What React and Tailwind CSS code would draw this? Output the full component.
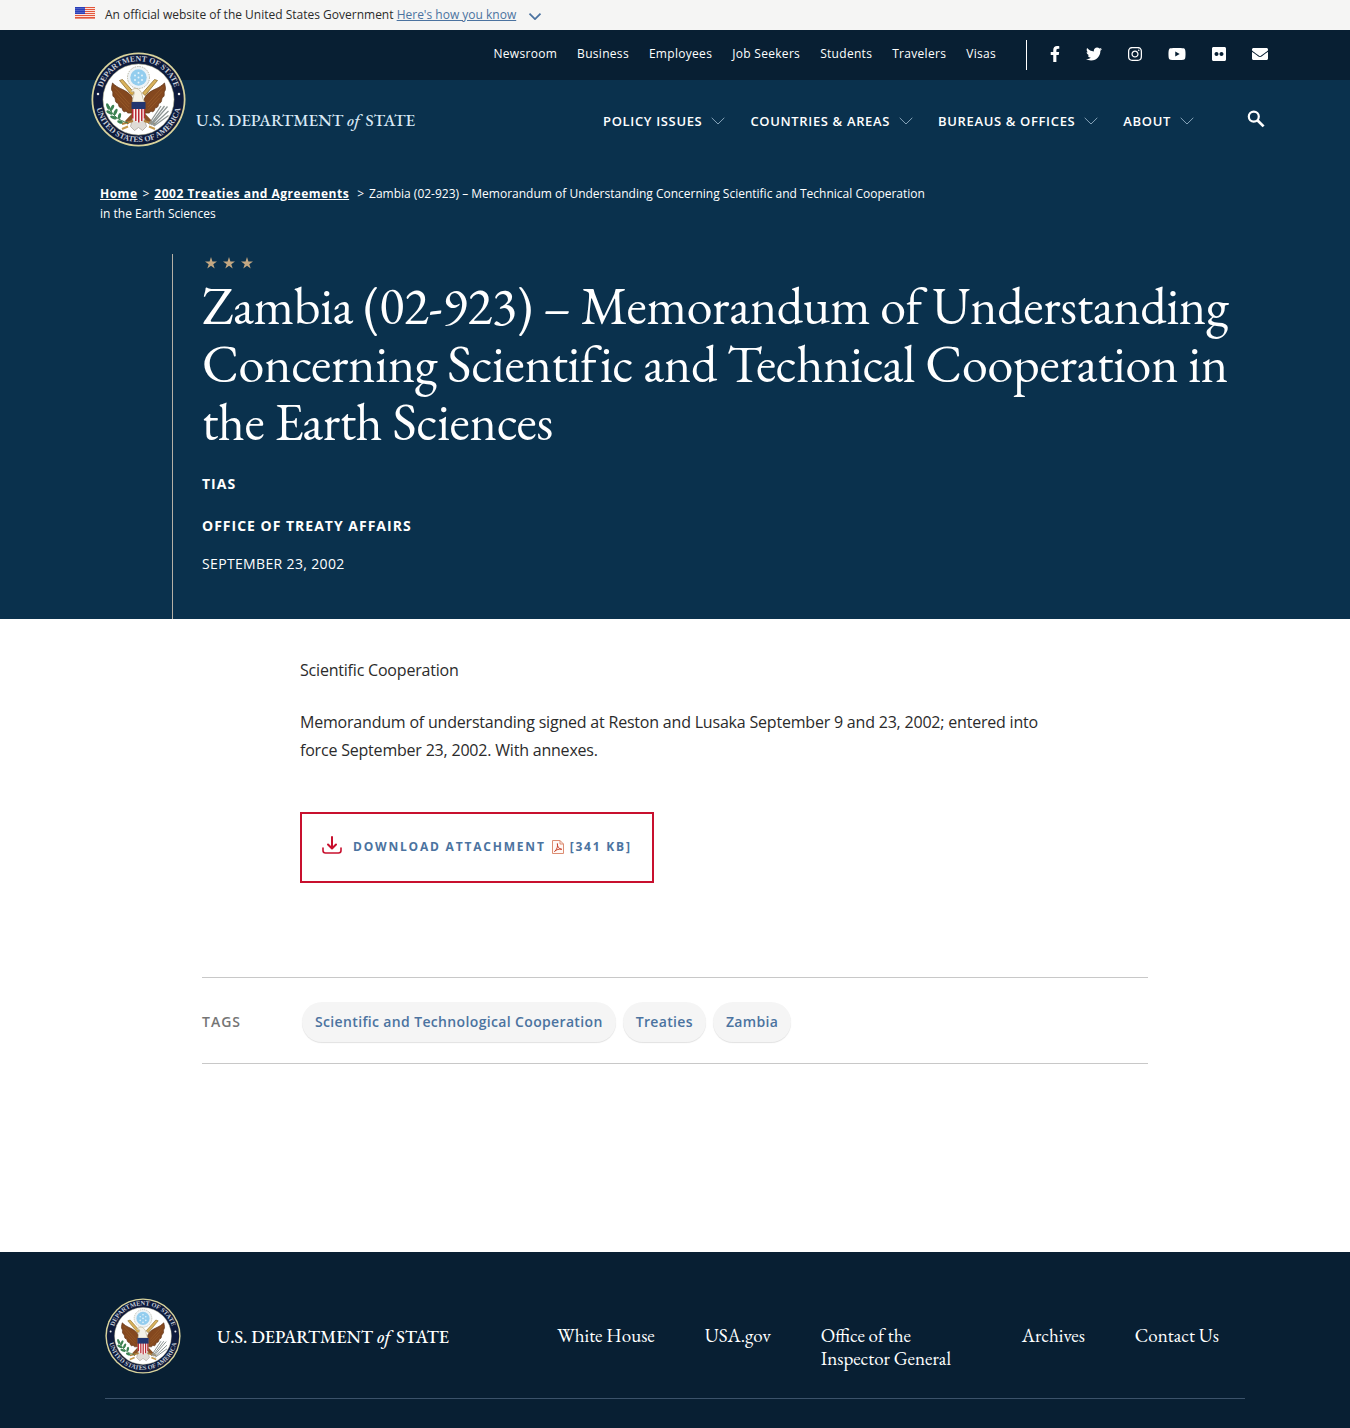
import React from "react";
import {
  FaFacebookF,
  FaTwitter,
  FaInstagram,
  FaYoutube,
  FaFlickr,
  FaEnvelope,
} from "react-icons/fa";

const serif = "font-['EB_Garamond','Liberation_Serif',serif]";

const utilityLinks = ["Newsroom", "Business", "Employees", "Job Seekers", "Students", "Travelers", "Visas"];

const socialLinks = [
  { label: "Facebook", Icon: FaFacebookF, size: "h-4 w-[10px]" },
  { label: "Twitter", Icon: FaTwitter, size: "h-4 w-4" },
  { label: "Instagram", Icon: FaInstagram, size: "h-4 w-[14px]" },
  { label: "YouTube", Icon: FaYoutube, size: "h-4 w-[18px]" },
  { label: "Flickr", Icon: FaFlickr, size: "h-4 w-[14px]" },
  { label: "Email", Icon: FaEnvelope, size: "h-4 w-4" },
];

const menus = ["Policy Issues", "Countries & Areas", "Bureaus & Offices", "About"];

const tags = ["Scientific and Technological Cooperation", "Treaties", "Zambia"];

function Flag() {
  return (
    <svg viewBox="0 0 20 12" className="h-3 w-5 shrink-0" aria-hidden="true">
      <rect width="20" height="12" fill="#fbe3dc" />
      {[0, 2, 4, 6, 8, 10].map((y) => (
        <rect key={y} y={y} width="20" height="1" fill="#e2573c" />
      ))}
      <rect y="11.4" width="20" height="0.6" fill="#e2573c" />
      <rect width="10" height="7" fill="#2a3fb8" />
      {[1, 3, 5].map((y) =>
        [1, 3, 5, 7, 9].map((x) => <circle key={`${x}-${y}`} cx={x} cy={y + 0.5} r="0.45" fill="#cdd5f5" />)
      )}
    </svg>
  );
}

function Chevron({ className, strokeWidth = 1 }) {
  return (
    <svg viewBox="0 0 14 8" className={className} fill="none" stroke="currentColor" strokeWidth={strokeWidth} aria-hidden="true">
      <path d="M0.7 0.8 L7 7 L13.3 0.8" />
    </svg>
  );
}

function SearchIcon() {
  return (
    <svg viewBox="0 0 24 24" className="h-6 w-6" fill="none" stroke="currentColor" aria-hidden="true">
      <circle cx="9.8" cy="9.6" r="5" strokeWidth="2.2" />
      <path d="M13.4 13.2 L19.6 19.4" strokeWidth="2.7" />
    </svg>
  );
}

function Seal({ id, className }) {
  return (
    <svg viewBox="0 0 190 190" className={className} role="img" aria-label="Department of State seal">
      <defs>
        <path id={`${id}-top`} d="M20.5 106 A75.5 75.5 0 1 1 169.5 106" />
        <path id={`${id}-bottom`} d="M10 81 A86 86 0 1 0 180 81" />
      </defs>
      <circle cx="95" cy="95" r="94" fill="#d9d39c" />
      <circle cx="95" cy="95" r="90.5" fill="#0d1a3c" />
      <circle cx="95" cy="95" r="71" fill="#fff" stroke="#c9c59a" strokeWidth="1" />
      <g fill="#c6cdd8" fontFamily="Liberation Serif, serif" fontSize="16" fontWeight="bold">
        <text textAnchor="middle">
          <textPath href={`#${id}-top`} startOffset="50%">DEPARTMENT OF STATE</textPath>
        </text>
        <text textAnchor="middle">
          <textPath href={`#${id}-bottom`} startOffset="50%">UNITED STATES OF AMERICA</textPath>
        </text>
      </g>
      <circle cx="14" cy="84" r="2.5" fill="#e8e8e8" />
      <circle cx="176" cy="84" r="2.5" fill="#e8e8e8" />

      {/* Glory of stars */}
      <circle cx="95" cy="51" r="22" fill="#eef3f6" stroke="#b9b7a4" strokeWidth="2" strokeDasharray="3 2" />
      <circle cx="95" cy="51" r="16.5" fill="#93cdee" />
      <g fill="#e4f3fb">
        <circle cx="95" cy="42" r="2" /><circle cx="88" cy="47" r="2" /><circle cx="102" cy="47" r="2" />
        <circle cx="95" cy="51" r="2" /><circle cx="88" cy="56" r="2" /><circle cx="102" cy="56" r="2" />
        <circle cx="95" cy="61" r="2" />
      </g>

      {/* Scroll */}
      <path d="M57 57 L63 55 L87 82 L82 87 Z M133 57 L127 55 L103 82 L108 87 Z" fill="#d9b25c" stroke="#8b6b2b" strokeWidth="1.5" />

      {/* Wings */}
      <path d="M43 62 C55 74 64 73 76 83 C84 90 86 99 84 114 L84 124 C77 119 75 126 70 118 C64 123 63 114 61 111 C55 113 56 104 53 102 C47 101 50 94 47 91 C41 88 45 82 43 79 C39 74 42 68 43 62 Z" fill="#84481f" stroke="#5f3417" strokeWidth="1.5" />
      <path d="M147 62 C135 74 126 73 114 83 C106 90 104 99 106 114 L106 124 C113 119 115 126 120 118 C126 123 127 114 129 111 C135 113 134 104 137 102 C143 101 140 94 143 91 C149 88 145 82 147 79 C151 74 148 68 147 62 Z" fill="#84481f" stroke="#5f3417" strokeWidth="1.5" />
      <g fill="none" stroke="#a5672f" strokeWidth="1">
        <path d="M47 70 L77 104 M48 79 L76 110 M53 92 L76 117 M143 70 L113 104 M142 79 L114 110 M137 92 L114 117" />
      </g>

      {/* Legs and tail */}
      <path d="M83 122 L68 138 L73 145 L88 132 Z M107 122 L122 138 L117 145 L102 132 Z" fill="#8a5227" />
      <path d="M85 126 H105 L111 149 L103 157 L95 151 L87 157 L79 149 Z" fill="#dfdbd6" stroke="#a8a19a" strokeWidth="1.5" />
      <path d="M62 144 L84 138 M106 138 L128 144" stroke="#b2803a" strokeWidth="4" />

      {/* Head */}
      <path d="M83 100 C83 88 88 84 86 79 L80 80 C82 73 91 70 97 76 C104 82 101 90 107 100 Z" fill="#f6f3e8" stroke="#b9ac8c" strokeWidth="1.5" />
      <path d="M80 80 L77 84 L84 83 Z" fill="#dba83b" />

      {/* Shield */}
      <path d="M82 101 H108 V128 C108 137 99 139 95 142 C91 139 82 137 82 128 Z" fill="#f8f4f0" />
      <g fill="#b92b38">
        <rect x="82" y="110" width="3" height="23" />
        <rect x="88" y="110" width="3" height="28" />
        <rect x="94" y="110" width="3" height="31" />
        <rect x="100" y="110" width="3" height="28" />
        <rect x="105.5" y="110" width="2.5" height="23" />
      </g>
      <path d="M81 100 H109 V114 H81 Z" fill="#23366f" />

      {/* Olive branch */}
      <path d="M36 108 C42 128 55 136 74 142" fill="none" stroke="#3f7a49" strokeWidth="2" />
      <g fill="#3c8253">
        <ellipse cx="34" cy="109" rx="3" ry="7" transform="rotate(-20 34 109)" />
        <ellipse cx="42" cy="112" rx="3" ry="7" transform="rotate(30 42 112)" />
        <ellipse cx="37" cy="121" rx="3" ry="7" transform="rotate(-60 37 121)" />
        <ellipse cx="49" cy="120" rx="3" ry="7" transform="rotate(25 49 120)" />
        <ellipse cx="45" cy="131" rx="3" ry="7" transform="rotate(-70 45 131)" />
        <ellipse cx="57" cy="128" rx="3" ry="6" transform="rotate(15 57 128)" />
        <ellipse cx="58" cy="140" rx="3" ry="6" transform="rotate(-70 58 140)" />
      </g>

      {/* Arrows */}
      <g stroke="#8e9695" strokeWidth="2.5">
        <path d="M116 144 L140 108 M119 145 L147 108 M121 146 L153 109 M124 147 L155 118 M126 148 L155 127" />
      </g>
      <path d="M74 149 L62 154 M116 149 L128 154" stroke="#c69a4e" strokeWidth="4" />
    </svg>
  );
}

function Wordmark({ className }) {
  return (
    <span className={`${serif} ${className} font-medium whitespace-nowrap`}>
      U.S. DEPARTMENT <i className="mr-[2px]">of</i> STATE
    </span>
  );
}

function Star() {
  return (
    <svg viewBox="0 0 24 24" className="h-3 w-3" fill="#c4a882" aria-hidden="true">
      <path d="M12 0 L14.9 8.8 H24 L16.6 14.3 L19.4 23 L12 17.7 L4.6 23 L7.4 14.3 L0 8.8 H9.1 Z" />
    </svg>
  );
}

function DownloadIcon() {
  return (
    <svg viewBox="0 0 20 18" className="h-[18px] w-5" fill="none" stroke="#c8102e" strokeWidth="2" strokeLinecap="round" strokeLinejoin="round" aria-hidden="true">
      <path d="M10 1 V12 M6 8.5 L10 12.5 L14 8.5" />
      <path d="M1 12 V14.5 Q1 17 3.5 17 H16.5 Q19 17 19 14.5 V12" strokeWidth="1.6" />
    </svg>
  );
}

function PdfIcon() {
  return (
    <svg viewBox="0 0 12 14" className="h-[14px] w-3" fill="none" stroke="#dc8d72" strokeWidth="1" aria-hidden="true">
      <path d="M0.5 0.5 H8 L11.5 4 V13.5 H0.5 Z" fill="#fff8f5" />
      <path d="M8 0.5 V4 H11.5" />
      <path d="M2.5 11.5 C5 9.5 6 6.5 5.4 3.6 C5 6.5 7 9 9.8 9.3 C7 8.8 4.5 9.5 2.5 11.5 Z" stroke="#c9432d" />
    </svg>
  );
}

export default function App() {
  return (
    <div className="flex min-h-screen flex-col bg-white font-['Open_Sans',sans-serif] text-[#2b2b2b]">
      <div className="bg-[#f5f5f4]">
        <div className="mx-auto flex h-[30px] max-w-[1200px] items-center text-xs">
          <div className="-mt-1"><Flag /></div>
          <p className="ml-[10px]">
            An official website of the United States Government{" "}
            <button type="button" className="text-[#4b73a0] underline">Here's how you know</button>
          </p>
          <Chevron className="mt-[2px] ml-3 h-[7px] w-[14px] text-[#4b73a0]" strokeWidth={2} />
        </div>
      </div>

      <header className="bg-[#0a314d] text-white">
        <div className="bg-[#081f33]">
          <div className="mx-auto flex h-[50px] max-w-[1200px] items-center justify-end pr-[7px]">
            <nav aria-label="Utility" className="flex gap-5 pr-[30px] pb-[2px] text-xs tracking-wide">
              {utilityLinks.map((l) => (
                <a key={l} href="#">{l}</a>
              ))}
            </nav>
            <div className="flex h-[30px] items-center gap-[26px] border-l border-white pb-[2px] pl-[23px]">
              {socialLinks.map(({ label, Icon, size }) => (
                <a key={label} href="#" aria-label={label}>
                  <Icon className={size} />
                </a>
              ))}
            </div>
          </div>
        </div>

        <div className="mx-auto flex h-[104px] max-w-[1200px] items-start justify-between pr-[7px] pl-4">
          <a href="#" className="flex items-start">
            <Seal id="header-seal" className="-mt-7 h-[95px] w-[95px]" />
            <Wordmark className="mt-7 ml-[10px] text-[17px] leading-6 text-[#d9e9f6]" />
          </a>
          <div className="flex items-center pt-[27px]">
            <nav aria-label="Main" className="flex gap-[25px] text-[13px] leading-7 font-semibold tracking-wider">
              {menus.map((m) => (
                <button key={m} type="button" className="flex items-center gap-[9px] uppercase">
                  {m}
                  <Chevron className="h-2 w-[14px] text-[#86a3b8]" />
                </button>
              ))}
            </nav>
            <button type="button" aria-label="Search" className="-mt-1 ml-[50px]">
              <SearchIcon />
            </button>
          </div>
        </div>

        <div className="mx-auto max-w-[1150px]">
          <nav aria-label="Breadcrumb" className="max-w-[836px] text-xs leading-5">
            <a href="#" className="font-bold tracking-[0.5px] underline">Home</a>
            <span className="mx-[5px]">&gt;</span>
            <a href="#" className="font-bold tracking-[0.5px] underline">2002 Treaties and Agreements</a>
            <span className="mr-[5px] ml-2">&gt;</span>
            Zambia (02-923) – Memorandum of Understanding Concerning Scientific and Technical Cooperation in the Earth Sciences
          </nav>
          <div className="mt-[30px] ml-[72px] border-l border-[#b5b0a6] pb-[45px] pl-[29px]">
            <div className="flex gap-[6px] px-[3px] pt-[3px]">
              <Star />
              <Star />
              <Star />
            </div>
            <h1 className={`${serif} mt-2 text-[52px] leading-[58px] tracking-[-0.3px]`}>
              Zambia (02-923) – Memorandum of Understanding Concerning Scientific and Technical Cooperation in the Earth Sciences
            </h1>
            <p className="mt-[23px] text-sm font-bold tracking-[1px]">TIAS</p>
            <p className="mt-[22px] text-sm font-bold tracking-[1px]">
              <a href="#">OFFICE OF TREATY AFFAIRS</a>
            </p>
            <p className="mt-[18px] text-sm tracking-wide">SEPTEMBER 23, 2002</p>
          </div>
        </div>
      </header>

      <main className="pb-[188px]">
        <div className="mx-auto max-w-[750px] pt-[37px] leading-7 tracking-[-0.2px]">
          <p>Scientific Cooperation</p>
          <p className="mt-6">
            Memorandum of understanding signed at Reston and Lusaka September 9 and 23, 2002; entered into force September 23, 2002. With annexes.
          </p>
          <a
            href="#"
            className="mt-12 inline-flex h-[71px] items-center border-2 border-[#c8102e] px-5 pb-[2px] text-xs font-bold tracking-[0.15em] text-[#4b73a0]"
          >
            <span className="-mt-1 mr-[11px]"><DownloadIcon /></span>
            DOWNLOAD ATTACHMENT
            <span className="mx-[6px]"><PdfIcon /></span>
            [341 KB]
          </a>
        </div>

        <div className="mx-auto mt-[94px] flex max-w-[946px] items-center border-y border-[#c8c8c8] pt-6 pb-[21px]">
          <h2 className="w-[100px] text-sm font-semibold tracking-[1px] text-[#757575]">TAGS</h2>
          <ul className="flex gap-[7px]">
            {tags.map((t) => (
              <li key={t}>
                <a href="#" className="flex h-10 items-center rounded-[20px] bg-[#f5f5f5] px-[13px] text-sm font-semibold tracking-wide text-[#4b73a0] shadow-[0_1px_1px_#e2e2e2]">
                  {t}
                </a>
              </li>
            ))}
          </ul>
        </div>
      </main>

      <footer className="grow bg-[#081f33] px-6 pb-7 text-white">
        <div className="mx-auto flex max-w-[1140px] items-start justify-between border-b border-[#3b526a] pt-[46px] pb-6">
          <a href="#" className="flex items-center">
            <Seal id="footer-seal" className="h-[76px] w-[76px]" />
            <Wordmark className="ml-9 text-[18px]" />
          </a>
          <nav aria-label="Footer" className={`${serif} mt-[26px] mr-[26px] flex gap-[50px] text-[19px] leading-[23px]`}>
            <a href="#">White House</a>
            <a href="#">USA.gov</a>
            <a href="#" className="w-[151px]">Office of the Inspector General</a>
            <a href="#">Archives</a>
            <a href="#">Contact Us</a>
          </nav>
        </div>
      </footer>
    </div>
  );
}
